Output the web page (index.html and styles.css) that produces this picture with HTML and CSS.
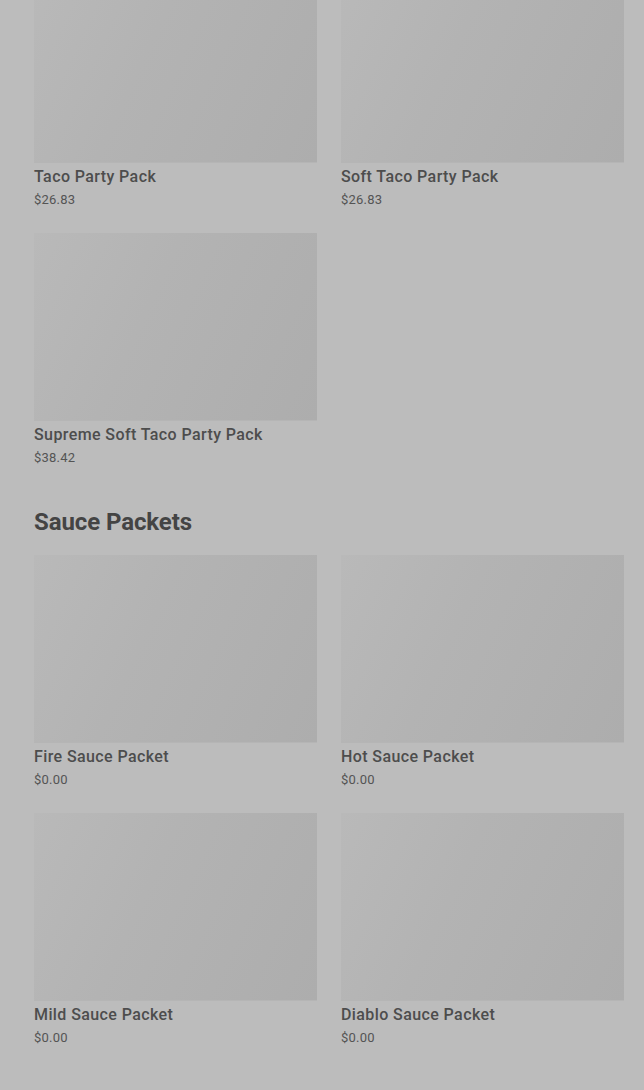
FILE: index.html
```html
<!DOCTYPE html>
<html lang="en">
<head>
<meta charset="utf-8">
<title>Menu</title>
<link rel="stylesheet" href="styles.css">
</head>
<body>
<main class="page">
  <section class="section section-first">
    <div class="grid">
      <a class="card">
        <div class="thumb"></div>
        <div class="name">Taco Party Pack</div>
        <div class="price">$26.83</div>
      </a>
      <a class="card">
        <div class="thumb"></div>
        <div class="name">Soft Taco Party Pack</div>
        <div class="price">$26.83</div>
      </a>
      <a class="card">
        <div class="thumb"></div>
        <div class="name">Supreme Soft Taco Party Pack</div>
        <div class="price">$38.42</div>
      </a>
    </div>
  </section>
  <section class="section">
    <h2 class="heading">Sauce Packets</h2>
    <div class="grid">
      <a class="card">
        <div class="thumb"></div>
        <div class="name">Fire Sauce Packet</div>
        <div class="price">$0.00</div>
      </a>
      <a class="card">
        <div class="thumb"></div>
        <div class="name">Hot Sauce Packet</div>
        <div class="price">$0.00</div>
      </a>
      <a class="card">
        <div class="thumb"></div>
        <div class="name">Mild Sauce Packet</div>
        <div class="price">$0.00</div>
      </a>
      <a class="card">
        <div class="thumb"></div>
        <div class="name">Diablo Sauce Packet</div>
        <div class="price">$0.00</div>
      </a>
    </div>
  </section>
</main>
</body>
</html>
```
FILE: styles.css
```css
* { box-sizing: border-box; }
html, body {
  margin: 0;
  padding: 0;
  background: #bcbcbc;
  height: 100%;
  overflow: hidden;
}
body {
  font-family: Roboto, "Liberation Sans", Arial, sans-serif;
  color: #474747;
}
.page {
  padding: 0 20px 0 34px;
}
.section-first {
  margin-top: -25px;
}
.grid {
  display: grid;
  grid-template-columns: 283px 283px;
  column-gap: 24px;
  row-gap: 24px;
}
.card {
  display: block;
  text-decoration: none;
  color: inherit;
}
.thumb {
  height: 188px;
  background: linear-gradient(115deg, #b9b9b9 0%, #b3b3b3 40%, #adadad 100%);
  border-bottom: 1px solid #b5b5b5;
}
.name {
  margin-top: 4px;
  font-size: 16px;
  line-height: 20px;
  font-weight: 500;
  letter-spacing: 0.4px;
  color: #4d4d4d;
}
.price {
  margin-top: 4px;
  font-size: 13px;
  line-height: 18px;
  letter-spacing: 0.2px;
  color: #545454;
}
.heading {
  margin: 41px 0 19px;
  font-size: 24px;
  line-height: 28px;
  font-weight: 700;
  color: #444444;
  letter-spacing: -0.1px;
}
```
